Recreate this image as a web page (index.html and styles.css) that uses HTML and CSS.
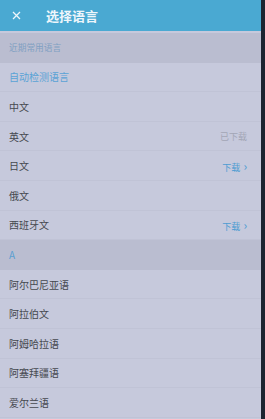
FILE: index.html
```html
<!DOCTYPE html>
<html lang="zh">
<head>
    <meta charset="UTF-8">
    <meta name="viewport" content="width=device-width, initial-scale=1.0">
    <title>选择语言</title>
    <link rel="stylesheet" href="styles.css">
</head>
<body>
    <div class="screen">
        <div class="topbar">
            <svg class="close" width="9" height="9" viewBox="0 0 9 9">
                <path d="M1 1 L8 8 M8 1 L1 8" stroke="#eef6fb" stroke-width="1.3" fill="none"/>
            </svg>
            <h1>选择语言</h1>
        </div>
        <div class="list">
            <div class="section">近期常用语言</div>
            <div class="row auto">自动检测语言</div>
            <div class="row">中文</div>
            <div class="row"><span>英文</span><span class="done">已下载</span></div>
            <div class="row"><span>日文</span><span class="get">下载<i>›</i></span></div>
            <div class="row">俄文</div>
            <div class="row"><span>西班牙文</span><span class="get">下载<i>›</i></span></div>
            <div class="section letter">A</div>
            <div class="row">阿尔巴尼亚语</div>
            <div class="row">阿拉伯文</div>
            <div class="row">阿姆哈拉语</div>
            <div class="row">阿塞拜疆语</div>
            <div class="row">爱尔兰语</div>
        </div>
    </div>
</body>
</html>
```

FILE: styles.css
```css
body {
    margin: 0;
    padding: 0;
    background-color: #1b2431;
    font-family: "Noto Sans CJK SC", "Noto Sans", sans-serif;
    overflow: hidden;
}
.screen {
    width: 261px;
    height: 419px;
    background-color: #c6c9dc;
    overflow: hidden;
}
.topbar {
    height: 31px;
    display: flex;
    align-items: center;
    background-color: #4aa9d2;
    color: #eef6fb;
}
.close {
    margin-left: 12px;
}
.topbar h1 {
    margin: 0 0 0 25px;
    font-size: 13px;
    font-weight: bold;
}
.list {
    padding-top: 2px;
}
.section {
    height: 29.6px;
    display: flex;
    align-items: center;
    padding-left: 9px;
    background-color: #babdd0;
    color: #7f9fc2;
    font-size: 8.7px;
}
.section.letter {
    color: #5a9fd0;
    font-size: 10px;
}
.row {
    height: 29.6px;
    box-sizing: border-box;
    display: flex;
    align-items: center;
    justify-content: space-between;
    padding: 0 14px 0 9px;
    border-bottom: 1px solid #c0c3d6;
    color: #45484f;
    font-size: 10px;
}
.row.auto {
    color: #5aa3d6;
}
.done {
    color: #a3a6b6;
    font-size: 9px;
}
.get {
    color: #4d9cd2;
    font-size: 9px;
}
.get i {
    font-style: normal;
    font-size: 12px;
    margin-left: 3px;
}
```
